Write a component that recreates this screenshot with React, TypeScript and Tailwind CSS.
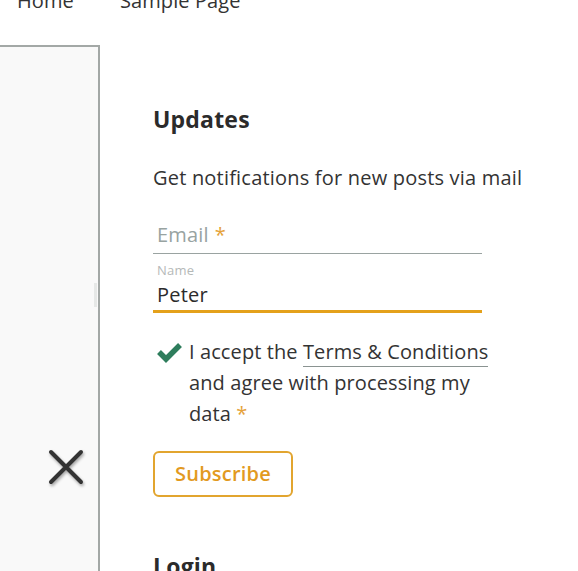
import React from "react";

export default function App() {
  const font = { fontFamily: '"Open Sans", "Noto Sans", sans-serif' };
  return (
    <div className="w-[578px] h-[571px] overflow-hidden bg-white text-[#333333]" style={font}>
      <nav className="flex h-[45px] pl-[17px] gap-[46px] text-[20px] tracking-[0.1px] leading-none -mt-[9px]">
        <span>Home</span>
        <span>Sample Page</span>
      </nav>
      <div className="flex mt-[9px]">
        <div className="relative w-[100px] h-[540px] shrink-0 bg-[#f9f9f9] border-t-2 border-r-2 border-[#a3a8a6]">
          <div className="absolute right-[1px] top-[236px] w-[3px] h-[24px] bg-[#e6e8e7]" />
          <div className="pl-[47px] pt-[401px]">
            <svg width="38" height="38" viewBox="0 0 38 38" style={{ filter: "drop-shadow(1px 2px 1.5px rgba(0,0,0,0.35))" }}>
              <path d="M4 4 L34 34 M34 4 L4 34" stroke="#333333" strokeWidth="4" strokeLinecap="round" />
            </svg>
          </div>
        </div>
        <main className="pl-[53px] pt-[60px] flex flex-col tracking-[0.2px]">
          <h2 className="text-[23px] font-bold leading-[28px] text-[#2b2b2b]">Updates</h2>
          <p className="mt-[31px] text-[20px] leading-[28px]">Get notifications for new posts via mail</p>
          <div className="mt-[29px] w-[329px] border-b border-[#9aa3a1] h-[33px] flex items-start pl-[4px] text-[20px] leading-[28px] text-[#98a3a1]">
            Email<span className="ml-[6px] text-[#e5a23a]">*</span>
          </div>
          <div className="w-[329px] border-b-[3px] border-[#e4a11b] pl-[4px] pt-[8px] flex flex-col">
            <span className="text-[13px] leading-[16px] text-[#b5b9b8]">Name</span>
            <span className="mt-[2px] text-[20px] leading-[30px] text-[#2b2b2b]">Peter</span>
          </div>
          <div className="mt-[23px] flex gap-[6px]">
            <svg width="27" height="22" viewBox="0 0 27 22" className="mt-[5px] shrink-0 ml-[3px]">
              <path d="M3 11 L10 18 L24 4" stroke="#2e7d5c" strokeWidth="5.5" fill="none" strokeLinejoin="miter" />
            </svg>
            <p className="text-[20px] leading-[31px] w-[310px] tracking-[0.1px]">
              I accept the{" "}
              <span className="border-b border-[#8a9391] pb-[1px]">Terms &amp; Conditions</span> and agree with processing my data{" "}
              <span className="text-[#e5a23a]">*</span>
            </p>
          </div>
          <button className="mt-[22px] w-[140px] h-[46px] border-2 border-[#e2a52f] rounded-[6px] text-[#e29a1f] text-[20px] font-semibold self-start">
            Subscribe
          </button>
          <h2 className="mt-[55px] text-[23px] font-bold leading-[28px] text-[#2b2b2b]">Login</h2>
        </main>
      </div>
    </div>
  );
}
